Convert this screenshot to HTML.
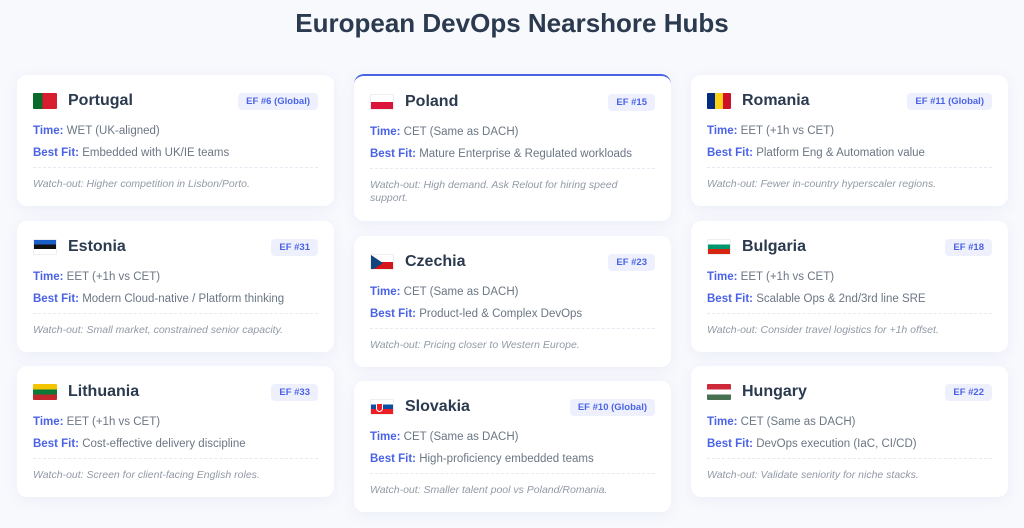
<!DOCTYPE html>
<html><head><meta charset="utf-8"><style>
*{box-sizing:border-box;margin:0;padding:0}
body{width:1024px;height:528px;background:#f8f9fd;font-family:"Liberation Sans",sans-serif;position:relative;overflow:hidden}
h1{position:absolute;top:8px;left:0;width:1024px;text-align:center;font-size:26px;font-weight:bold;color:#2b3a4e}
.card{position:absolute;width:317px;background:#fff;border-radius:10px;box-shadow:0 3px 14px rgba(90,100,200,.08);padding:0 16px}
.card.hl{border-top:2px solid #4a63e6}
.hd{position:relative;height:45px}
.flag{position:absolute;left:0;top:18px;width:24px;height:16px;overflow:hidden;border-radius:1px}
.nm{position:absolute;left:35px;top:17px;font-size:16px;font-weight:bold;color:#2b3a4e}
.bd{position:absolute;right:0;top:18px;height:17px;line-height:17px;padding:0 8px;background:#eef1fd;border-radius:4px;color:#4a63e6;font-size:9.5px;font-weight:bold}
.ln{font-size:11.5px;color:#6b7684;height:22px;line-height:22px}
.ln b{color:#4a63e6}
.dv{border-top:1px dashed #e6e9f2;margin:3px 0 10px}
.w{font-size:10.5px;font-style:italic;color:#929aa6;line-height:13px;padding-bottom:14px}
</style></head><body>
<h1>European DevOps Nearshore Hubs</h1>

<div class="card" style="left:17px;top:75px;height:131px"><div class="hd"><div class="flag" style="background:linear-gradient(90deg,#0a6a2a 40%,#d81e2e 40%)"></div><div class="nm">Portugal</div><div class="bd">EF #6 (Global)</div></div><div class="ln"><b>Time:</b> WET (UK-aligned)</div><div class="ln"><b>Best Fit:</b> Embedded with UK/IE teams</div><div class="dv"></div><div class="w">Watch-out: Higher competition in Lisbon/Porto.</div></div>

<div class="card" style="left:17px;top:221px;height:131px"><div class="hd"><div class="flag" style="background:linear-gradient(#1a5fc8 33%,#111 33%,#111 66%,#fff 66%);border:1px solid #eee"></div><div class="nm">Estonia</div><div class="bd">EF #31</div></div><div class="ln"><b>Time:</b> EET (+1h vs CET)</div><div class="ln"><b>Best Fit:</b> Modern Cloud-native / Platform thinking</div><div class="dv"></div><div class="w">Watch-out: Small market, constrained senior capacity.</div></div>

<div class="card" style="left:17px;top:366px;height:131px"><div class="hd"><div class="flag" style="background:linear-gradient(#f5c400 33%,#0a7a3a 33%,#0a7a3a 66%,#c1272d 66%)"></div><div class="nm">Lithuania</div><div class="bd">EF #33</div></div><div class="ln"><b>Time:</b> EET (+1h vs CET)</div><div class="ln"><b>Best Fit:</b> Cost-effective delivery discipline</div><div class="dv"></div><div class="w">Watch-out: Screen for client-facing English roles.</div></div>

<div class="card hl" style="left:354px;top:74px;height:147px"><div class="hd"><div class="flag" style="background:linear-gradient(#fff 50%,#dc143c 50%);border:1px solid #eee"></div><div class="nm">Poland</div><div class="bd">EF #15</div></div><div class="ln"><b>Time:</b> CET (Same as DACH)</div><div class="ln"><b>Best Fit:</b> Mature Enterprise &amp; Regulated workloads</div><div class="dv"></div><div class="w">Watch-out: High demand. Ask Relout for hiring speed<br>support.</div></div>

<div class="card" style="left:354px;top:236px;height:131px"><div class="hd"><div class="flag" style="background:linear-gradient(#fff 50%,#d7141a 50%);border:1px solid #eee"><svg width="24" height="16" style="position:absolute;left:0;top:0"><polygon points="0,0 12,8 0,16" fill="#11457e"/></svg></div><div class="nm">Czechia</div><div class="bd">EF #23</div></div><div class="ln"><b>Time:</b> CET (Same as DACH)</div><div class="ln"><b>Best Fit:</b> Product-led &amp; Complex DevOps</div><div class="dv"></div><div class="w">Watch-out: Pricing closer to Western Europe.</div></div>

<div class="card" style="left:354px;top:381px;height:131px"><div class="hd"><div class="flag" style="background:linear-gradient(#fff 33%,#0b4ea2 33%,#0b4ea2 66%,#ee1c25 66%);border:1px solid #eee"><div style="position:absolute;left:5px;top:3px;width:7px;height:9px;background:#ee1c25;border:1px solid #fff;border-radius:0 0 4px 4px"></div></div><div class="nm">Slovakia</div><div class="bd">EF #10 (Global)</div></div><div class="ln"><b>Time:</b> CET (Same as DACH)</div><div class="ln"><b>Best Fit:</b> High-proficiency embedded teams</div><div class="dv"></div><div class="w">Watch-out: Smaller talent pool vs Poland/Romania.</div></div>

<div class="card" style="left:691px;top:75px;height:131px"><div class="hd"><div class="flag" style="background:linear-gradient(90deg,#002b7f 33%,#fcd116 33%,#fcd116 66%,#ce1126 66%)"></div><div class="nm">Romania</div><div class="bd">EF #11 (Global)</div></div><div class="ln"><b>Time:</b> EET (+1h vs CET)</div><div class="ln"><b>Best Fit:</b> Platform Eng &amp; Automation value</div><div class="dv"></div><div class="w">Watch-out: Fewer in-country hyperscaler regions.</div></div>

<div class="card" style="left:691px;top:221px;height:131px"><div class="hd"><div class="flag" style="background:linear-gradient(#fff 33%,#00966e 33%,#00966e 66%,#d62612 66%);border:1px solid #eee"></div><div class="nm">Bulgaria</div><div class="bd">EF #18</div></div><div class="ln"><b>Time:</b> EET (+1h vs CET)</div><div class="ln"><b>Best Fit:</b> Scalable Ops &amp; 2nd/3rd line SRE</div><div class="dv"></div><div class="w">Watch-out: Consider travel logistics for +1h offset.</div></div>

<div class="card" style="left:691px;top:366px;height:131px"><div class="hd"><div class="flag" style="background:linear-gradient(#ce2939 33%,#fff 33%,#fff 66%,#477050 66%)"></div><div class="nm">Hungary</div><div class="bd">EF #22</div></div><div class="ln"><b>Time:</b> CET (Same as DACH)</div><div class="ln"><b>Best Fit:</b> DevOps execution (IaC, CI/CD)</div><div class="dv"></div><div class="w">Watch-out: Validate seniority for niche stacks.</div></div>
</body></html>
